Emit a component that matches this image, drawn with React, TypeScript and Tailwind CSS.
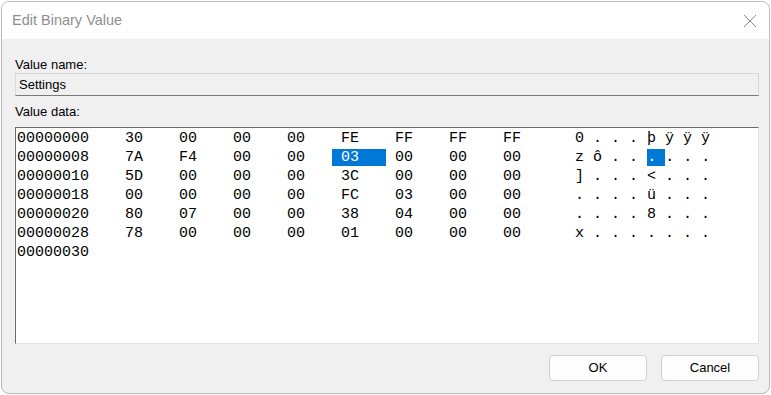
import React from 'react'

const rows: { off: string; bytes: string[]; ascii: string[] }[] = [
    { off: '00000000', bytes: ['30', '00', '00', '00', 'FE', 'FF', 'FF', 'FF'], ascii: ['0', '.', '.', '.', 'þ', 'ÿ', 'ÿ', 'ÿ'] },
    { off: '00000008', bytes: ['7A', 'F4', '00', '00', '03', '00', '00', '00'], ascii: ['z', 'ô', '.', '.', '.', '.', '.', '.'] },
    { off: '00000010', bytes: ['5D', '00', '00', '00', '3C', '00', '00', '00'], ascii: [']', '.', '.', '.', '<', '.', '.', '.'] },
    { off: '00000018', bytes: ['00', '00', '00', '00', 'FC', '03', '00', '00'], ascii: ['.', '.', '.', '.', 'ü', '.', '.', '.'] },
    { off: '00000020', bytes: ['80', '07', '00', '00', '38', '04', '00', '00'], ascii: ['.', '.', '.', '.', '8', '.', '.', '.'] },
    { off: '00000028', bytes: ['78', '00', '00', '00', '01', '00', '00', '00'], ascii: ['x', '.', '.', '.', '.', '.', '.', '.'] },
]

function HexLine({ off, bytes, ascii, sel }: { off: string; bytes: string[]; ascii: string[]; sel: boolean }) {
    const line = off + '    ' + bytes.join('    ') + '      ' + ascii.join(' ')
    if (!sel) return <div className="h-[19px] leading-[19px]">{line}</div>
    // selected byte 4 (hex cols 35-41, ascii cols 70-72)
    return (
        <div className="h-[19px] leading-[19px]">
            {line.slice(0, 35)}
            <span className="bg-[#0078d7] text-white">{line.slice(35, 41)}</span>
            {line.slice(41, 70)}
            <span className="bg-[#0078d7] text-white">{line.slice(70, 72)}</span>
            {line.slice(72)}
        </div>
    )
}

export default function App() {
    return (
        <div className="w-[771px] h-[395px] bg-white pt-[1px] pl-[1px]" style={{ fontFamily: '"Liberation Sans", Arial, sans-serif' }}>
            <div className="w-[769px] h-[393px] rounded-[8px] border border-[#b9b9b9] overflow-hidden flex flex-col bg-[#f0f0f0]">
                {/* Title bar */}
                <div className="h-[37px] bg-white flex items-center justify-between pl-[10px] pr-[12px] shrink-0">
                    <span className="text-[14.5px] text-[#8f8f8f]">Edit Binary Value</span>
                    <svg width="14" height="14" viewBox="0 0 14 14" className="mt-[1px]">
                        <path d="M1 1 L13 13 M13 1 L1 13" stroke="#8a8a8a" strokeWidth="1" />
                    </svg>
                </div>

                <div className="flex-1 flex flex-col pl-[13px] pr-[10px]">
                    <div className="text-[13px] text-black mt-[18px] leading-[16px]">Value name:</div>
                    <div className="h-[23px] border border-[#d9d9d9] border-b-[#7a7a7a] bg-[#f0f0f0] flex items-center pl-[3px] text-[13px] text-black">
                        Settings
                    </div>
                    <div className="text-[13px] text-black mt-[8px] leading-[16px]">Value data:</div>
                    <div
                        className="mt-[7px] h-[217px] bg-white border border-[#e3e3e3] border-t-[#6a6a6a] border-l-[#6a6a6a] pl-[1px] pt-[1px] whitespace-pre text-[15px] text-black"
                        style={{ fontFamily: '"Liberation Mono", "DejaVu Sans Mono", monospace' }}
                    >
                        {rows.map((r, i) => (
                            <HexLine key={r.off} off={r.off} bytes={r.bytes} ascii={r.ascii} sel={i === 1} />
                        ))}
                        <div className="h-[19px] leading-[19px]">00000030</div>
                    </div>

                    <div className="flex justify-end gap-[14px] mt-[11px]">
                        <button className="w-[98px] h-[26px] rounded-[4px] border border-[#d0d0d0] bg-[#fdfdfd] text-[13px] text-black">OK</button>
                        <button className="w-[98px] h-[26px] rounded-[4px] border border-[#d0d0d0] bg-[#fdfdfd] text-[13px] text-black">Cancel</button>
                    </div>
                </div>
            </div>
        </div>
    )
}
